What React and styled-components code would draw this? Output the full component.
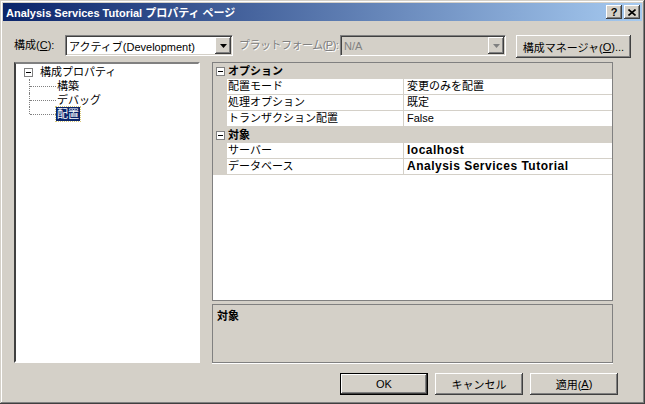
import React from "react";
import styled, { createGlobalStyle, css } from "styled-components";

// Fuentes y colores base del dialogo
const FONT = `"Liberation Sans", "Noto Sans CJK JP", sans-serif`;
const FACE = "#D4D0C8";
const SHADOW = "#808080";
const DARK = "#404040";

const GlobalStyle = createGlobalStyle`
  html, body { margin: 0; padding: 0; background: ${FACE}; }
  body { font-family: ${FONT}; font-size: 11px; color: #000; }
  * { box-sizing: border-box; }
`;

const raised = css`
  background: ${FACE};
  box-shadow: inset -1px -1px ${DARK}, inset 1px 1px #fff,
    inset -2px -2px ${SHADOW}, inset 2px 2px ${FACE};
`;

const sunken = css`
  border: 1px solid;
  border-color: ${SHADOW} #fff #fff ${SHADOW};
  box-shadow: inset 1px 1px ${DARK}, inset -1px -1px ${FACE};
`;

const Window = styled.div`
  width: 645px;
  height: 404px;
  padding: 3px;
  display: flex;
  flex-direction: column;
  background: ${FACE};
  box-shadow: inset -1px -1px ${DARK}, inset 1px 1px ${FACE},
    inset -2px -2px ${SHADOW}, inset 2px 2px #fff;
`;

const TitleBar = styled.div`
  height: 18px;
  display: flex;
  align-items: center;
  padding: 0 2px 0 3px;
  background: linear-gradient(to right, #0a246a, #a6caf0);
  color: #fff;
  font-weight: bold;
  font-size: 11px;
`;

const TitleText = styled.div`
  flex: 1;
  white-space: nowrap;
`;

const CaptionButton = styled.div`
  ${raised};
  width: 16px;
  height: 14px;
  margin-left: ${(p) => (p.$gap ? "2px" : "0")};
  display: flex;
  align-items: center;
  justify-content: center;
  color: #000;
  font-size: 11px;
  font-weight: bold;
  line-height: 1;
  font-family: "Liberation Sans", sans-serif;
`;

const Content = styled.div`
  flex: 1;
  display: flex;
  flex-direction: column;
  padding: 14px 11px 0 11px;
`;

const Toolbar = styled.div`
  display: flex;
  align-items: flex-start;
  height: 23px;
`;

const Label = styled.div`
  width: ${(p) => p.$w}px;
  margin-left: ${(p) => p.$ml || 0}px;
  line-height: 20px;
  white-space: nowrap;
  letter-spacing: ${(p) => (p.$tight ? "-0.5px" : "0")};
  color: ${(p) => (p.$disabled ? SHADOW : "#000")};
  text-shadow: ${(p) => (p.$disabled ? "1px 1px 0 #fff" : "none")};
`;

const U = styled.span`
  text-decoration: underline;
`;

const Combo = styled.div`
  ${sunken};
  width: ${(p) => p.$w}px;
  height: 21px;
  padding: 1px 1px 1px 3px;
  display: flex;
  align-items: center;
  background: ${(p) => (p.$disabled ? FACE : "#fff")};
  color: ${(p) => (p.$disabled ? SHADOW : "#000")};
`;

const ComboText = styled.div`
  flex: 1;
  white-space: nowrap;
  overflow: hidden;
`;

const ArrowButton = styled.div`
  ${raised};
  width: 16px;
  height: 17px;
  display: flex;
  align-items: center;
  justify-content: center;
`;

const PushButton = styled.div`
  ${raised};
  width: ${(p) => p.$w}px;
  height: ${(p) => p.$h}px;
  margin-left: ${(p) => (p.$auto ? "auto" : "0")};
  display: flex;
  align-items: center;
  justify-content: center;
  white-space: nowrap;
  ${(p) =>
    p.$default &&
    css`
      border: 1px solid #000;
      box-shadow: inset -1px -1px ${DARK}, inset 1px 1px #fff,
        inset -2px -2px ${SHADOW};
    `}
`;

const Main = styled.div`
  margin-top: 4px;
  height: 301px;
  display: flex;
  gap: 12px;
`;

const TreePane = styled.div`
  border: 2px solid;
  border-color: ${SHADOW} #fff #fff ${DARK};
  width: 186px;
  background: #fff;
  padding-top: 1px;
`;

const TreeRow = styled.div`
  height: 14px;
  display: flex;
  align-items: center;
  line-height: 14px;
  padding-left: ${(p) => p.$indent}px;
`;

const ExpandBox = styled.div`
  width: 9px;
  height: 9px;
  border: 1px solid ${SHADOW};
  background: #fff;
  display: flex;
  align-items: center;
  justify-content: center;
  margin-right: 7px;
  &::after {
    content: "";
    width: 5px;
    height: 1px;
    background: #000;
  }
`;

const Connector = styled.span`
  position: relative;
  width: 27px;
  height: 14px;
  &::before {
    content: "";
    position: absolute;
    left: 0;
    top: 0;
    height: ${(p) => (p.$last ? 7 : 14)}px;
    border-left: 1px dotted ${SHADOW};
  }
  &::after {
    content: "";
    position: absolute;
    left: 1px;
    right: 0;
    top: 7px;
    border-top: 1px dotted ${SHADOW};
  }
`;

const TreeLabel = styled.span`
  padding: 0 1px;
  white-space: nowrap;
  ${(p) =>
    p.$selected &&
    css`
      background: #0a246a;
      color: #fff;
      outline: 1px dotted #d8c878;
    `}
`;

const RightColumn = styled.div`
  width: 401px;
  display: flex;
  flex-direction: column;
  gap: 3px;
`;

const Grid = styled.div`
  height: 239px;
  border: 1px solid ${SHADOW};
  background: #fff;
`;

const CategoryRow = styled.div`
  height: 16px;
  display: flex;
  align-items: center;
  background: ${FACE};
  font-weight: bold;
`;

const Gutter = styled.div`
  width: 14px;
  height: 16px;
  flex-shrink: 0;
  display: flex;
  align-items: center;
  justify-content: center;
  background: ${FACE};
  & > div {
    margin-right: 0;
  }
`;

const CategoryLabel = styled.div`
  padding-left: 1px;
  line-height: 16px;
`;

const PropRow = styled.div`
  height: 16px;
  display: flex;
`;

const NameCell = styled.div`
  width: 177px;
  height: 16px;
  line-height: 15px;
  padding-left: 1px;
  border-bottom: 1px solid ${FACE};
  border-right: 1px solid ${FACE};
  white-space: nowrap;
`;

const ValueCell = styled.div`
  flex: 1;
  height: 16px;
  line-height: 15px;
  padding-left: 3px;
  border-bottom: 1px solid ${FACE};
  white-space: nowrap;
  ${(p) =>
    p.$bold &&
    css`
      font-size: 12px;
      font-weight: bold;
      letter-spacing: 0.5px;
    `}
`;

const Description = styled.div`
  flex: 1;
  border: 1px solid ${SHADOW};
  box-shadow: 0 1px 0 #fff;
  padding: 2px 4px;
  font-weight: bold;
`;

const ButtonRow = styled.div`
  margin-top: 10px;
  margin-right: 13px;
  display: flex;
  justify-content: flex-end;
  gap: 7px;
`;

const Arrow = ({ color = "#000" }) => (
  <svg width="7" height="4" viewBox="0 0 7 4">
    <path d="M0 0h7L3.5 4z" fill={color} />
  </svg>
);

const CloseGlyph = () => (
  <svg width="8" height="7" viewBox="0 0 8 7">
    <path d="M0.5 0.5l7 6M7.5 0.5l-7 6" stroke="#000" strokeWidth="1.6" />
  </svg>
);

const properties = [
  {
    category: "オプション",
    rows: [
      ["配置モード", "変更のみを配置"],
      ["処理オプション", "既定"],
      ["トランザクション配置", "False"],
    ],
  },
  {
    category: "対象",
    rows: [
      ["サーバー", "localhost", true],
      ["データベース", "Analysis Services Tutorial", true],
    ],
  },
];

const children = ["構築", "デバッグ", "配置"];

export default function App() {
  return (
    <>
      <GlobalStyle />
      <Window>
        <TitleBar>
          <TitleText>Analysis Services Tutorial プロパティ ページ</TitleText>
          <CaptionButton>?</CaptionButton>
          <CaptionButton $gap>
            <CloseGlyph />
          </CaptionButton>
        </TitleBar>

        <Content>
          <Toolbar>
            <Label $w={51}>
              構成(<U>C</U>):
            </Label>
            <Combo $w={168}>
              <ComboText>アクティブ(Development)</ComboText>
              <ArrowButton>
                <Arrow />
              </ArrowButton>
            </Combo>
            <Label $w={101} $ml={6} $disabled $tight>
              プラットフォーム(<U>P</U>):
            </Label>
            <Combo $w={166} $disabled>
              <ComboText>N/A</ComboText>
              <ArrowButton>
                <Arrow color={SHADOW} />
              </ArrowButton>
            </Combo>
            <PushButton $w={115} $h={23} $auto>
              構成マネージャ(<U>O</U>)...
            </PushButton>
          </Toolbar>

          <Main>
            <TreePane>
              <TreeRow $indent={8}>
                <ExpandBox />
                <span>構成プロパティ</span>
              </TreeRow>
              {children.map((c, i) => (
                <TreeRow key={c} $indent={13}>
                  <Connector $last={i === children.length - 1} />
                  <TreeLabel $selected={i === children.length - 1}>{c}</TreeLabel>
                </TreeRow>
              ))}
            </TreePane>

            <RightColumn>
              <Grid>
                {properties.map((group) => (
                  <React.Fragment key={group.category}>
                    <CategoryRow>
                      <Gutter>
                        <ExpandBox />
                      </Gutter>
                      <CategoryLabel>{group.category}</CategoryLabel>
                    </CategoryRow>
                    {group.rows.map(([name, value, bold]) => (
                      <PropRow key={name}>
                        <Gutter />
                        <NameCell>{name}</NameCell>
                        <ValueCell $bold={bold}>{value}</ValueCell>
                      </PropRow>
                    ))}
                  </React.Fragment>
                ))}
              </Grid>
              <Description>対象</Description>
            </RightColumn>
          </Main>

          <ButtonRow>
            <PushButton $w={88} $h={22} $default>
              OK
            </PushButton>
            <PushButton $w={88} $h={22}>
              キャンセル
            </PushButton>
            <PushButton $w={88} $h={22}>
              適用(<U>A</U>)
            </PushButton>
          </ButtonRow>
        </Content>
      </Window>
    </>
  );
}
